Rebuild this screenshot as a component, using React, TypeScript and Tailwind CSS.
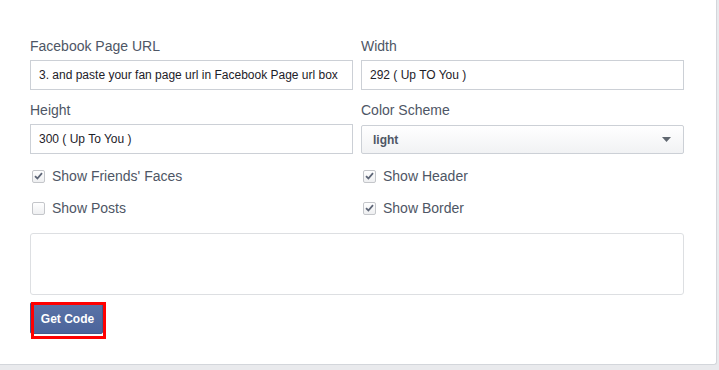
import React from 'react'

const font = { fontFamily: '"Liberation Sans", Arial, Helvetica, sans-serif' }

function Field({ label, value }: { label: string; value: string }) {
  return (
    <div>
      <p className="text-[14px] leading-[20px] text-[#4e5665] mb-[4px]">{label}</p>
      <div className="h-[30px] border border-[#ccd0d6] bg-white px-[8px] flex items-center text-[12px] text-[#1d2129]">
        {value}
      </div>
    </div>
  )
}

function Check({ label, checked }: { label: string; checked: boolean }) {
  return (
    <div className="flex items-center h-[20px]">
      <span className="ml-[2px] w-[13px] h-[13px] rounded-[2px] border border-[#c4c6ca] bg-gradient-to-b from-white to-[#eeeff1] flex items-center justify-center">
        {checked && (
          <svg width="9" height="8" viewBox="0 0 9 8">
            <path d="M1 4.2 L3.4 6.5 L8 1.2" fill="none" stroke="#5e6677" strokeWidth="1.8" />
          </svg>
        )}
      </span>
      <span className="ml-[7px] text-[14px] text-[#4e5665]">{label}</span>
    </div>
  )
}

export default function App() {
  return (
    <div className="w-[719px] h-[370px] bg-[#e9eaed] overflow-hidden" style={font}>
      <div className="w-[717px] h-[365px] bg-white border-r border-b border-[#d3d6db] rounded-br-[3px] pl-[30px] pt-[36px]">
        <div className="grid grid-cols-[323px_323px] gap-x-[8px] gap-y-[10px]">
          <Field label="Facebook Page URL" value="3. and paste your fan page url in Facebook Page url box" />
          <Field label="Width" value="292 ( Up TO You )" />
          <Field label="Height" value="300 ( Up To You )" />
          <div>
            <p className="text-[14px] leading-[20px] text-[#4e5665] mb-[5px]">Color Scheme</p>
            <div className="h-[29px] border border-[#ccd0d6] rounded-[2px] bg-gradient-to-b from-white to-[#f1f2f4] pl-[11px] pr-[12px] flex items-center justify-between">
              <span className="text-[12px] font-bold text-[#4e5665]">light</span>
              <svg width="9" height="5" viewBox="0 0 9 5">
                <path d="M0 0 H9 L4.5 5 Z" fill="#606770" />
              </svg>
            </div>
          </div>
        </div>
        <div className="grid grid-cols-[323px_323px] gap-x-[8px] gap-y-[12px] mt-[12px]">
          <Check label="Show Friends' Faces" checked />
          <Check label="Show Header" checked />
          <Check label="Show Posts" checked={false} />
          <Check label="Show Border" checked />
        </div>
        <div className="w-[654px] h-[62px] mt-[15px] border border-[#dddfe2] rounded-[3px]" />
        <div className="relative mt-[7px] w-[76px] h-[37px]">
          <button className="h-[32px] w-[73px] pl-[2px] pt-[1px] border border-[#435a8b] rounded-[2px] bg-gradient-to-b from-[#5b74a8] to-[#4b649b] text-white text-[12px] font-bold">
            Get Code
          </button>
          <div className="absolute left-[1px] top-0 w-[75px] h-[37px] border-[3px] border-[#f00]" />
        </div>
      </div>
    </div>
  )
}
